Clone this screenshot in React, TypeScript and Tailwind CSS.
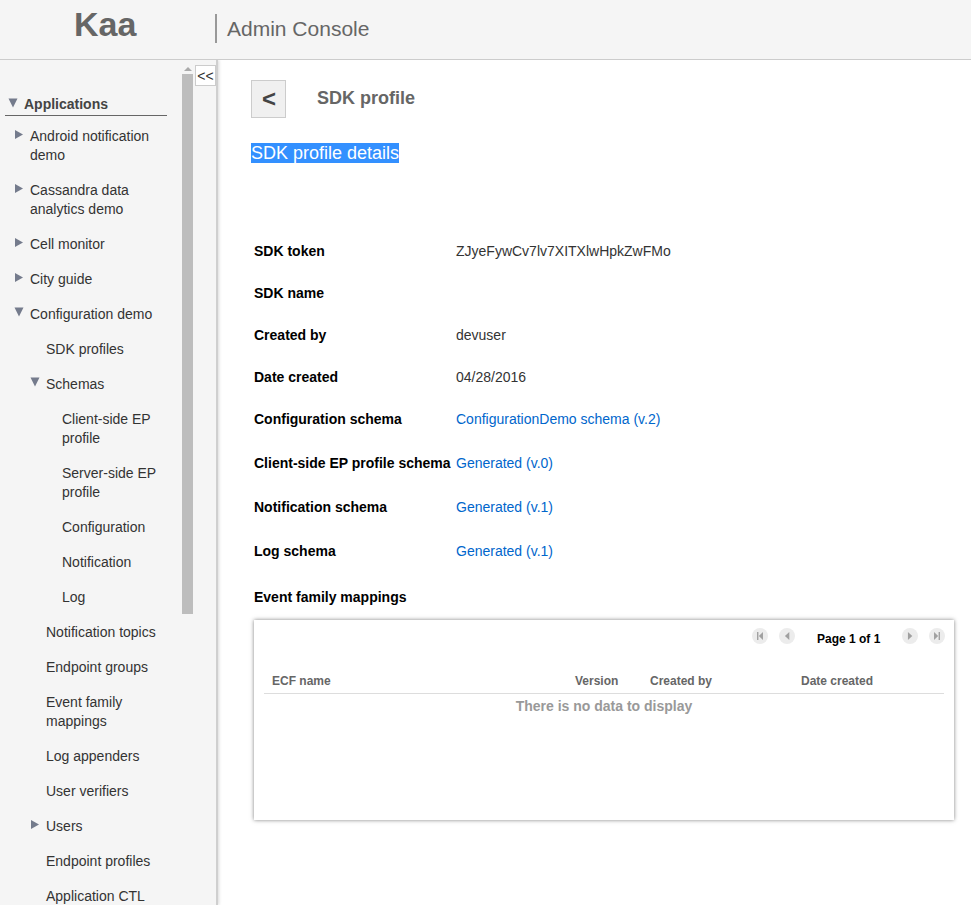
import React from "react";

type Node = { label: string[]; level: number; arrow?: "right" | "down" };

const tree: Node[] = [
  { label: ["Android notification", "demo"], level: 1, arrow: "right" },
  { label: ["Cassandra data", "analytics demo"], level: 1, arrow: "right" },
  { label: ["Cell monitor"], level: 1, arrow: "right" },
  { label: ["City guide"], level: 1, arrow: "right" },
  { label: ["Configuration demo"], level: 1, arrow: "down" },
  { label: ["SDK profiles"], level: 2 },
  { label: ["Schemas"], level: 2, arrow: "down" },
  { label: ["Client-side EP", "profile"], level: 3 },
  { label: ["Server-side EP", "profile"], level: 3 },
  { label: ["Configuration"], level: 3 },
  { label: ["Notification"], level: 3 },
  { label: ["Log"], level: 3 },
  { label: ["Notification topics"], level: 2 },
  { label: ["Endpoint groups"], level: 2 },
  { label: ["Event family", "mappings"], level: 2 },
  { label: ["Log appenders"], level: 2 },
  { label: ["User verifiers"], level: 2 },
  { label: ["Users"], level: 2, arrow: "right" },
  { label: ["Endpoint profiles"], level: 2 },
  { label: ["Application CTL"], level: 2 },
];

const indent: Record<number, string> = { 1: "pl-[30px]", 2: "pl-[46px]", 3: "pl-[62px]" };
const arrowPos: Record<number, string> = { 1: "left-[14px]", 2: "left-[30px]", 3: "left-[46px]" };

function Arrow({ dir, className }: { dir: "right" | "down"; className: string }) {
  return (
    <svg className={className} width="10" height="10" viewBox="0 0 10 10">
      {dir === "right" ? <path d="M1 1 L9 5.5 L1 10 Z" fill="#747b8c" /> : <path d="M0.5 0.5 L9.5 0.5 L5 9.5 Z" fill="#747b8c" />}
    </svg>
  );
}

function TreeRow({ node }: { node: Node }) {
  return (
    <div className={`relative py-2 text-[14px] leading-[19px] text-[#333] ${indent[node.level]}`}>
      {node.arrow && <Arrow dir={node.arrow} className={`absolute top-[10px] ${arrowPos[node.level]}`} />}
      {node.label.map((l) => (
        <div key={l} className="whitespace-nowrap">{l}</div>
      ))}
    </div>
  );
}

function Field({ label, value, link, h }: { label: string; value?: string; link?: boolean; h: string }) {
  return (
    <div className={`flex items-center text-[14px] ${h}`}>
      <div className="w-[202px] whitespace-nowrap font-bold text-black">{label}</div>
      {value && <div className={link ? "text-[#0066cc]" : "text-[#333]"}>{value}</div>}
    </div>
  );
}

function PagerBtn({ kind }: { kind: "first" | "prev" | "next" | "last" }) {
  const path = {
    first: "M4.4 3.6h1.2v6.8H4.4z M9.6 3.6v6.8L6 7z",
    prev: "M9 3.6v6.8L5.2 7z",
    next: "M5.2 3.6v6.8L9 7z",
    last: "M8.4 3.6h1.2v6.8H8.4z M4.4 3.6v6.8L8 7z",
  }[kind];
  return (
    <svg width="16" height="16" viewBox="0 0 14 14" className="shrink-0">
      <circle cx="7" cy="7" r="7" fill="#ececec" />
      <path d={path} fill="#a0a0a0" />
    </svg>
  );
}

export default function App() {
  return (
    <div className="flex h-[905px] w-[971px] flex-col overflow-hidden bg-white font-['Liberation_Sans',Arial,sans-serif]">
      <header className="relative z-10 flex h-[60px] shrink-0 border-b border-[#cccccc] bg-[#f5f5f5]">
        <div className="w-[215px] shrink-0 pl-[74px] pt-[4px] text-[34px] font-bold leading-[40px] text-[#666]">Kaa</div>
        <div className="mt-[14px] h-[29px] w-[2px] shrink-0 bg-[#999]" />
        <div className="pl-[10px] pt-[15px] text-[21px] leading-[28px] text-[#666]">Admin Console</div>
      </header>
      <div className="flex min-h-0 flex-1">
        <aside className="relative flex w-[218px] shrink-0 border-r-2 border-[#cfcfcf] bg-[#f5f5f5] shadow-[1px_0_3px_rgba(0,0,0,0.15)]">
          <div className="w-[180px] shrink-0 overflow-hidden pt-[34px]">
            <div className="relative ml-[5px] mr-[13px] h-[22px] border-b border-[#666] pl-[19px] text-[14px] font-bold leading-[20px] text-[#444]">
              <Arrow dir="down" className="absolute left-[3px] top-[4px]" />
              Applications
            </div>
            <div className="pt-[3px]">
              {tree.map((n, i) => (
                <TreeRow key={i} node={n} />
              ))}
            </div>
          </div>
          <div className="relative w-[15px] shrink-0 bg-[#f5f5f5]">
            <svg width="12" height="6" viewBox="0 0 12 6" className="absolute left-[2px] top-[6px]">
              <path d="M2 5 L6 1 L10 5 Z" fill="#aaaaaa" />
            </svg>
            <div className="absolute left-[2px] top-[14px] h-[540px] w-[11px] bg-[#bdbdbd]" />
          </div>
          <div className="flex-1">
            <div className="mt-[5px] flex h-[21px] w-[21px] items-center justify-center border border-[#cccccc] bg-white text-[14px] leading-none text-[#333]">&lt;&lt;</div>
          </div>
        </aside>
        <main className="min-w-0 flex-1 pl-[33px] pt-[20px]">
          <div className="flex items-center">
            <div className="flex h-[38px] w-[35px] items-center justify-center border border-[#cccccc] bg-[#f0f0f0] pl-[1px] text-[24px] font-bold leading-none text-[#444]">&lt;</div>
            <div className="pl-[31px] pb-[2px] text-[18px] font-bold text-[#666]">SDK profile</div>
          </div>
          <div className="mt-[25px] h-[20px] text-[18px] leading-[20px]">
            <span className="bg-[#3390ff] text-white">SDK profile details</span>
          </div>
          <div className="pl-[3px] pt-[67px]">
            <Field label="SDK token" value="ZJyeFywCv7lv7XITXlwHpkZwFMo" h="h-[42px]" />
            <Field label="SDK name" h="h-[42px]" />
            <Field label="Created by" value="devuser" h="h-[42px]" />
            <Field label="Date created" value="04/28/2016" h="h-[42px]" />
            <Field label="Configuration schema" value="ConfigurationDemo schema (v.2)" link h="h-[42px]" />
            <div className="h-[1px]" />
            <Field label="Client-side EP profile schema" value="Generated (v.0)" link h="h-[44px]" />
            <Field label="Notification schema" value="Generated (v.1)" link h="h-[44px]" />
            <Field label="Log schema" value="Generated (v.1)" link h="h-[44px]" />
            <div className="h-[1px]" />
            <Field label="Event family mappings" h="h-[46px]" />
            <section className="h-[200px] w-[700px] bg-white px-[10px] shadow-[0_0_4px_rgba(0,0,0,0.5)]">
              <div className="-mr-[1px] flex h-[32px] items-center justify-end">
                <PagerBtn kind="first" />
                <div className="w-[11px]" />
                <PagerBtn kind="prev" />
                <div className="w-[107px] pl-[22px] pt-[5px] text-[12px] font-bold text-black">Page 1 of 1</div>
                <PagerBtn kind="next" />
                <div className="w-[11px]" />
                <PagerBtn kind="last" />
              </div>
              <div className="mt-[20px] flex h-[22px] items-center border-b border-[#dddddd] pb-[4px] text-[12px] font-bold text-[#666]">
                <div className="w-[311px] pl-[8px]">ECF name</div>
                <div className="w-[75px]">Version</div>
                <div className="w-[151px]">Created by</div>
                <div>Date created</div>
              </div>
              <div className="pt-[3px] text-center text-[14px] font-bold leading-[18px] text-[#999]">There is no data to display</div>
            </section>
          </div>
        </main>
      </div>
    </div>
  );
}
